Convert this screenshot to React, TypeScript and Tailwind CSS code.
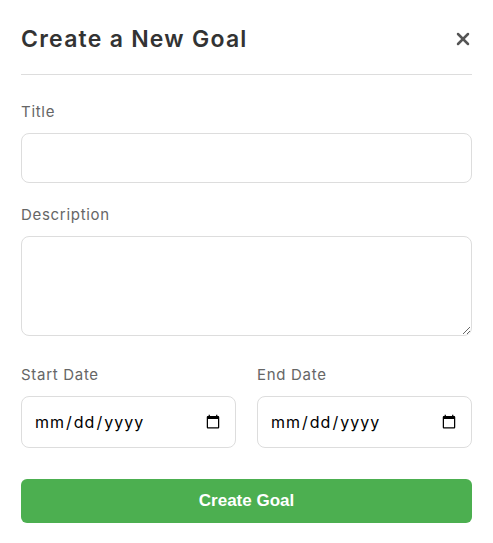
import { X } from 'lucide-react';

const labelCls = 'block mb-[10px] text-[15px] text-[#666] leading-[22px] tracking-[0.7px]';
const fieldCls =
  'w-full border border-[#ddd] rounded-lg px-[12px] text-base text-black bg-white outline-none tracking-[1px]';

export default function App() {
  return (
    <div className="min-h-screen bg-white font-['Inter',sans-serif]">
      <div className="px-[21px] pt-[22px]">
        <div className="flex items-center justify-between pb-[18px] border-b border-[#ddd]">
          <h2 className="text-[23px] leading-[34px] font-semibold text-[#333] tracking-[1.25px]">
            Create a New Goal
          </h2>
          <button type="button" className="text-[#555] -mr-[1px]">
            <X className="w-[20px] h-[20px]" strokeWidth={3} />
          </button>
        </div>

        <form className="pt-[26px]">
          <div className="mb-[21px]">
            <label className={labelCls}>Title</label>
            <input type="text" className={`${fieldCls} block h-[50px]`} />
          </div>

          <div className="mb-[28px]">
            <label className={labelCls}>Description</label>
            <textarea className={`${fieldCls} block h-[100px] py-[12px]`} />
          </div>

          <div className="grid grid-cols-2 gap-[21px] mb-[31px]">
            <div>
              <label className={labelCls}>Start Date</label>
              <input type="date" className={`${fieldCls} block h-[52px]`} />
            </div>
            <div>
              <label className={labelCls}>End Date</label>
              <input type="date" className={`${fieldCls} block h-[52px]`} />
            </div>
          </div>

          <button
            type="button"
            className="w-full h-[44px] rounded-md bg-[#4caf50] text-white text-[17px] font-bold font-['Liberation_Sans',sans-serif]"
          >
            Create Goal
          </button>
        </form>
      </div>
    </div>
  );
}
